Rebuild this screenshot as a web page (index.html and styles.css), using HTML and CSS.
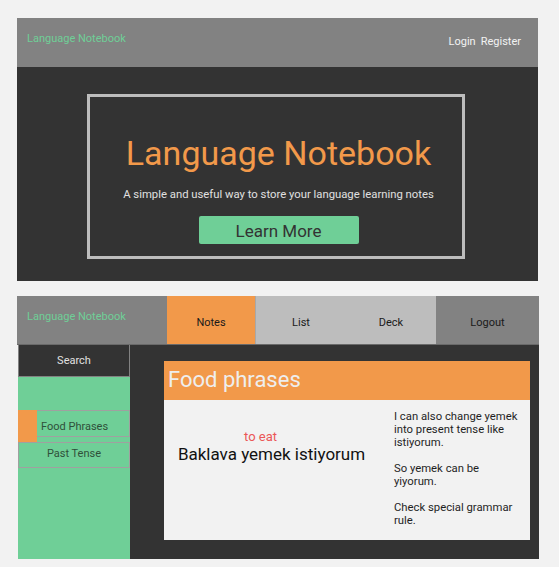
FILE: index.html
```html
<!DOCTYPE html>
<html>
<head>
<meta charset="utf-8">
<link rel="stylesheet" href="styles.css">
</head>
<body>
<div class="page">
  <section class="landing">
    <header class="top-bar">
      <div class="brand">Language Notebook</div>
      <nav class="auth"><span>Login</span><span>Register</span></nav>
    </header>
    <div class="hero">
      <div class="hero-box">
        <h1 class="hero-title">Language Notebook</h1>
        <p class="hero-sub">A simple and useful way to store your language learning notes</p>
        <div class="btn">Learn More</div>
      </div>
    </div>
  </section>

  <section class="app">
    <header class="app-bar">
      <div class="app-brand">Language Notebook</div>
      <div class="tab tab-active">Notes</div>
      <div class="tab tab-light">List</div>
      <div class="tab tab-light">Deck</div>
      <div class="tab tab-dark">Logout</div>
    </header>
    <div class="app-body">
      <aside class="sidebar">
        <div class="search">Search</div>
        <div class="deck-list">
          <div class="deck-item deck-selected"><span class="marker"></span><span class="deck-name">Food Phrases</span></div>
          <div class="deck-item deck-plain"><span class="deck-name">Past Tense</span></div>
        </div>
      </aside>
      <main class="main">
        <div class="card">
          <div class="card-head">Food phrases</div>
          <div class="card-body">
            <div class="phrase">
              <div class="meaning">to eat</div>
              <div class="sentence">Baklava yemek istiyorum</div>
            </div>
            <div class="notes">
              <p>I can also change yemek into present tense like istiyorum.</p>
              <p>So yemek can be yiyorum.</p>
              <p>Check special grammar rule.</p>
            </div>
          </div>
        </div>
      </main>
    </div>
  </section>
</div>
</body>
</html>
```

FILE: styles.css
```css
* { box-sizing: border-box; }
body {
  margin: 0;
  background: #f2f2f2;
  font-family: Roboto, "Liberation Sans", sans-serif;
}
.page {
  padding: 18px 0 0 17px;
}
.landing {
  width: 521px;
}
.top-bar {
  height: 49px;
  background: #828282;
  display: flex;
  justify-content: space-between;
  padding: 0 17px 0 10px;
}
.brand {
  color: #6fcf97;
  font-size: 11px;
  padding-top: 14px;
}
.auth {
  display: flex;
  gap: 5px;
  color: #f2f2f2;
  font-size: 11px;
  padding-top: 17px;
}
.hero {
  height: 214px;
  background: #333333;
  padding: 27px 0 0 70px;
}
.hero-box {
  width: 378px;
  height: 165px;
  border: 3px solid #bdbdbd;
  padding-left: 5px;
  display: flex;
  flex-direction: column;
  align-items: center;
}
.hero-title {
  margin: 36px 0 0 0;
  font-weight: 400;
  font-size: 34px;
  line-height: 40px;
  color: #f2994a;
}
.hero-sub {
  margin: 15px 0 0 0;
  font-size: 11.3px;
  line-height: 14px;
  color: #e0e0e0;
}
.btn {
  margin-top: 14px;
  width: 160px;
  height: 28px;
  background: #6fcf97;
  border-radius: 2px;
  color: #333333;
  font-size: 17px;
  line-height: 30px;
  text-align: center;
}
.app {
  margin-top: 15px;
  width: 522px;
}
.app-bar {
  height: 49px;
  display: grid;
  grid-template-columns: 150px 89px 90px 90px 103px;
  border-bottom: 1px solid #6a6a6a;
}
.app-brand {
  background: #828282;
  color: #6fcf97;
  font-size: 11px;
  padding: 14px 0 0 10px;
}
.tab {
  font-size: 11px;
  color: #1a1a1a;
  text-align: center;
  padding-top: 20px;
}
.tab-active { background: #f2994a; border-right: 1px solid #a8a8a8; }
.tab-light { background: #bdbdbd; }
.tab-dark { background: #828282; }
.app-body {
  display: flex;
  height: 214px;
}
.sidebar {
  width: 112px;
  background: #6fcf97;
  margin-left: 1px;
}
.search {
  height: 32px;
  background: #333333;
  border: 1px solid #828282;
  border-top: none;
  color: #e0e0e0;
  font-size: 11px;
  text-align: center;
  line-height: 31px;
}
.deck-list {
  margin-top: 33px;
}
.deck-item {
  position: relative;
  height: 27px;
  border: 1px solid #a0a0a0;
  font-size: 11px;
  color: #2f4f3a;
  display: flex;
  align-items: center;
}
.deck-plain {
  margin-top: 5px;
  height: 26px;
  justify-content: center;
}
.marker {
  position: absolute;
  left: -1px;
  top: -1px;
  width: 19px;
  height: 33px;
  background: #f2994a;
}
.deck-selected .deck-name {
  margin-left: 22px;
  padding-top: 6px;
}
.deck-plain .deck-name {
  padding-bottom: 4px;
}
.main {
  flex: 1;
  background: #333333;
  padding: 16px 0 0 34px;
}
.card {
  width: 366px;
}
.card-head {
  height: 39px;
  background: #f2994a;
  color: #eeeeee;
  font-size: 22px;
  line-height: 38px;
  padding-left: 4px;
}
.card-body {
  height: 140px;
  background: #f2f2f2;
  display: flex;
}
.phrase {
  width: 215px;
  display: flex;
  flex-direction: column;
  align-items: center;
  padding-top: 30px;
}
.meaning {
  color: #eb5757;
  font-size: 13px;
  line-height: 14px;
  margin-right: 22px;
}
.sentence {
  color: #111111;
  font-size: 17px;
  line-height: 21px;
}
.notes {
  flex: 1;
  padding: 10px 12px 0 15px;
  font-size: 11.3px;
  line-height: 13px;
  color: #1f1f1f;
}
.notes p {
  margin: 0 0 13px 0;
}
```
